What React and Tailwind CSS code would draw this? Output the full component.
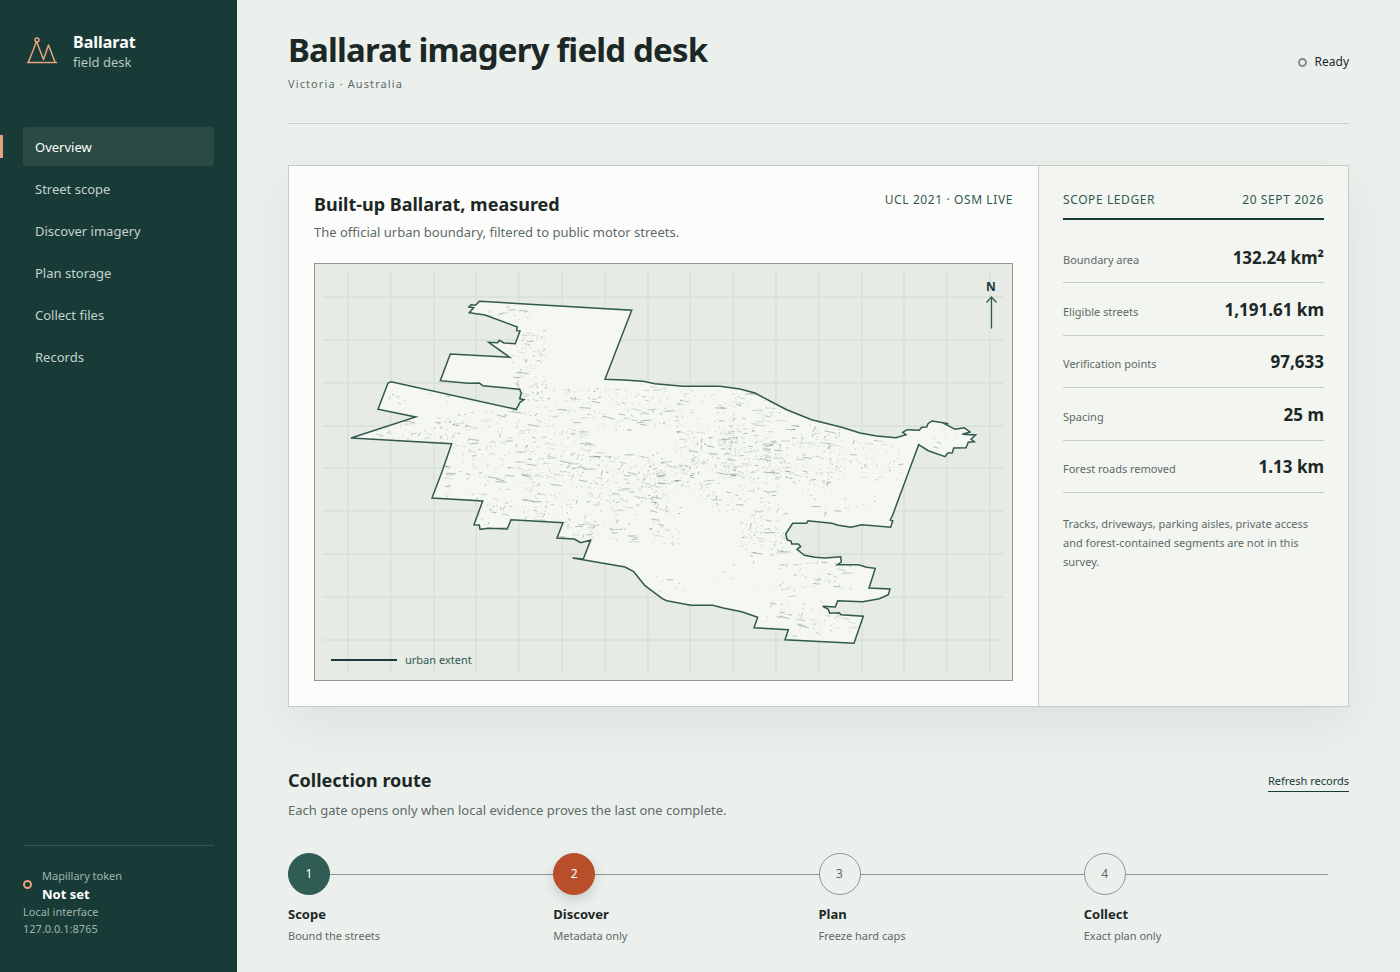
import { useMemo } from "react";

const navItems = [
  "Overview",
  "Street scope",
  "Discover imagery",
  "Plan storage",
  "Collect files",
  "Records",
];

const ledger = [
  { label: "Boundary area", value: "132.24 km²" },
  { label: "Eligible streets", value: "1,191.61 km" },
  { label: "Verification points", value: "97,633" },
  { label: "Spacing", value: "25 m" },
  { label: "Forest roads removed", value: "1.13 km" },
];

const steps = [
  {
    title: "Scope",
    note: "Bound the streets",
    circle: "border-[#2f5d54] bg-[#2f5d54] text-white",
  },
  {
    title: "Discover",
    note: "Metadata only",
    circle: "border-[#b94f2a] bg-[#b94f2a] text-white shadow-[0_5px_12px_rgba(25,59,55,0.18)]",
  },
  {
    title: "Plan",
    note: "Freeze hard caps",
    circle: "border-[#8b9894] bg-[#ebf0ed] text-[#5d6b68]",
  },
  {
    title: "Collect",
    note: "Exact plan only",
    circle: "border-[#8b9894] bg-[#ebf0ed] text-[#5d6b68]",
  },
];

const boundary =
  "M479.3 301.3L631.7 310.3L605 379.3L623.3 380L643.3 381.3L655 383.7L683.3 386.3L720 386.3L740 389L755 393L770 401L786.7 409.7L811.7 419.7L841.7 427.3L860 433L876.7 436L896 437.7L906 434.7L902.7 432.3L907.3 429.7L919.3 430.3L921.7 427.3L926.7 427L928 423.7L932 421L940 422.3L948.3 423.7L945 424L955 429.3L964.3 427.7L970 432L962.3 434.3L975.7 435L971 439.3L974.3 441.7L968.3 442.3L966 447.7L953.7 448L952.3 452.7L947.7 453L945 456.7L928.3 450.7L918.7 444.7L909.3 470L892.7 515L890.3 520L892.7 520.7L890.7 527.3L861.7 524.7L851 527.3L838.3 525.3L831.7 523.3L808 520.7L806.7 523.3L792.7 523.3L785.7 534L787.3 540L791 541L791.7 544L798.3 544L800.7 546.7L797 549.3L804.3 555.3L815 557.3L825 558L840.7 556.7L841.3 562L837.3 564.7L858.3 564.7L866.7 567.3L875.3 568.3L869 588L890 589L888.3 594.7L879.3 598.7L862.7 601.7L837.7 600.7L835.3 607L822.7 606.3L828.3 609.3L829.7 613.3L839.3 612.7L841 614.7L863.3 616.3L854 643.3L785 639.7L788.3 629.7L754 627.7L757.7 617.3L741.7 611.7L723.3 608L712.7 605.3L691 605.3L666.7 600.7L662.3 598.7L645 585.7L633.7 571.7L625 567L572.7 558L583.3 559L590.7 540L580.7 542.7L574.3 539L557 538L563 522.7L511 519.7L507.3 529L488.3 528.3L480 529.3L479.3 525L474 524.7L482.7 501L432 498L442 471.7L451.7 443.7L351 438L415.7 417L378 409.3L388 383L391 381.7L516.3 409.3L520 402.3L524 399.7L519.7 398.7L521.3 393.3L519.7 389.3L482.7 385.7L479.3 383L468.3 383.3L440.3 380.7L450.3 354L509.7 357.3L488.7 342.3L497.7 342.7L499.3 340.3L504 343L515.3 343.7L520 331L516.7 330.7L517.3 327L485 315L469.3 312.7L473.7 307.7L469 307L471 304.7L475.7 305.3Z";

// [x, y, width, height, count] of each neighbourhood
const districts = [
  [485, 304, 45, 16, 16],
  [512, 330, 34, 70, 110],
  [390, 390, 60, 14, 12],
  [375, 415, 80, 24, 65],
  [440, 410, 100, 60, 150],
  [440, 470, 100, 50, 110],
  [480, 505, 60, 24, 30],
  [535, 388, 110, 42, 130],
  [525, 430, 65, 60, 130],
  [590, 452, 75, 50, 150],
  [535, 490, 90, 50, 110],
  [620, 500, 60, 45, 60],
  [640, 384, 90, 44, 90],
  [675, 430, 60, 45, 130],
  [640, 460, 80, 40, 110],
  [730, 392, 50, 50, 90],
  [720, 440, 70, 40, 170],
  [700, 480, 80, 32, 60],
  [740, 512, 50, 44, 90],
  [785, 425, 55, 60, 130],
  [835, 440, 65, 40, 65],
  [925, 428, 40, 20, 10],
  [655, 560, 100, 35, 18],
  [770, 560, 80, 30, 60],
  [765, 595, 60, 20, 18],
  [765, 612, 85, 26, 55],
  [800, 480, 80, 35, 28],
];

const verticals = [348, 391, 434, 476, 519, 562, 605, 648, 690, 733, 776, 819, 862, 904, 947, 990];
const horizontals = [297, 340, 383, 426, 468, 511, 554, 597, 640];

// Fixed seed, so the strokes stay put between renders
const buildStreets = () => {
  let seed = 2021;
  const random = () => {
    seed = (seed * 16807) % 2147483647;
    return seed / 2147483647;
  };
  const layers = ["", "", ""];
  districts.forEach(([x, y, w, h, count]) => {
    for (let i = 0; i < count; i++) {
      const px = x + random() * w;
      const py = y + random() * h;
      const across = random() < 0.72;
      const size = random();
      const length = across ? 1 + size ** 5 * 11 : 1 + size ** 4 * 4;
      const angle = ((across ? 4 : 112) + (random() - 0.5) * 24) * (Math.PI / 180);
      const dx = (Math.cos(angle) * length).toFixed(1);
      const dy = (Math.sin(angle) * length).toFixed(1);
      layers[i % 3] += `M${px.toFixed(1)} ${py.toFixed(1)}l${dx} ${dy}`;
    }
  });
  return layers;
};

const Logo = () => (
  <svg viewBox="0 0 38 38" className="h-[38px] w-[38px] shrink-0" fill="none" stroke="#e6a27d" strokeWidth="1.5">
    <path d="M4 29.500H34M5.500 29L13.500 8.500L20.500 26.500L25.500 12L32 29" strokeLinejoin="round" />
    <circle cx="14" cy="7" r="2" />
  </svg>
);

const Sidebar = () => (
  <aside className="sticky top-0 flex h-screen w-[237px] shrink-0 flex-col bg-[#193b37] px-[23px] pt-8 pb-[35px] text-[#c3d2cc]">
    <div className="flex items-center gap-3">
      <Logo />
      <div>
        <p className="text-base leading-5 font-bold text-white">Ballarat</p>
        <p className="text-[13px] leading-5 text-[#b5c8c1]">field desk</p>
      </div>
    </div>
    <nav className="mt-[55px] flex flex-col gap-[3px]">
      {navItems.map((item, index) => (
        <a
          key={item}
          href="#"
          className={
            index === 0
              ? "relative flex h-[39px] items-center rounded-[3px] bg-[#2b4a45] px-3 pt-[2px] text-[13px] text-white before:absolute before:top-2 before:-left-[23px] before:h-[23px] before:w-[3px] before:bg-[#e6a27d]"
              : "flex h-[39px] items-center rounded-[3px] px-3 pt-[2px] text-[13px]"
          }
        >
          {item}
        </a>
      ))}
    </nav>
    <div className="mt-auto border-t border-[#355650] pt-5 text-[11px] text-[#9db5ac]">
      <div className="flex items-center gap-[10px]">
        <span className="h-[9px] w-[9px] rounded-full border-2 border-[#e6a27d]"></span>
        <div>
          <p className="leading-[19px]">Mapillary token</p>
          <p className="text-[13px] leading-[18px] font-bold text-white">Not set</p>
        </div>
      </div>
      <p className="leading-[17px]">Local interface</p>
      <p className="leading-[17px]">127.0.0.1:8765</p>
    </div>
  </aside>
);

const ExtentMap = () => {
  const streets = useMemo(() => buildStreets(), []);

  return (
    <div className="relative mt-[21px] border border-[#8b9894] bg-[#e6ebe5]">
      <svg viewBox="315 264 697 416" className="block h-auto w-full" role="img" aria-label="Urban extent of Ballarat">
        <defs>
          <clipPath id="extent">
            <path d={boundary} />
          </clipPath>
        </defs>
        <g stroke="#d8dfd9" strokeWidth="1.300">
          {verticals.map((x) => (
            <path key={x} d={`M${x} 272V672`} />
          ))}
          {horizontals.map((y) => (
            <path key={y} d={`M323 ${y}H1004`} />
          ))}
        </g>
        <path d={boundary} fill="#f6f7f2" fillOpacity="0.920" />
        <g clipPath="url(#extent)" fill="none" stroke="#3c5751">
          <path d={streets[0]} strokeWidth="0.600" strokeOpacity="0.600" />
          <path d={streets[1]} strokeWidth="0.600" strokeOpacity="0.400" />
          <path d={streets[2]} strokeWidth="0.500" strokeOpacity="0.300" />
        </g>
        <path d={boundary} fill="none" stroke="#31594f" strokeWidth="1.500" />
        <path d="M991.500 328.500V297M986.500 302.500L991.500 297L996.500 302.500" fill="none" stroke="#31594f" strokeWidth="1.300" />
        <text x="991" y="291" textAnchor="middle" fontSize="12" fontWeight="700" fill="#193b37">
          N
        </text>
      </svg>
      <div className="absolute bottom-3 left-4 flex items-center gap-2 text-[11px] leading-4 text-[#31594f]">
        <span className="h-[2px] w-[66px] bg-[#193b37]"></span>
        urban extent
      </div>
    </div>
  );
};

const ScopeCard = () => (
  <section className="mt-[41px] flex border border-[#c4ccc7] bg-[#fcfdfb] shadow-[0_18px_45px_rgba(25,59,55,0.07)]">
    <div className="min-w-0 flex-1 p-[25px]">
      <div className="flex items-start justify-between">
        <div>
          <h2 className="pt-px text-[18px] leading-6 font-bold">Built-up Ballarat, measured</h2>
          <p className="mt-[6px] text-[13px] leading-5 text-[#5d6b68]">
            The official urban boundary, filtered to public motor streets.
          </p>
        </div>
        <p className="pt-px text-[12px] leading-4 tracking-wider text-[#31594f]">UCL 2021 · OSM LIVE</p>
      </div>
      <ExtentMap />
    </div>
    <div className="w-[310px] shrink-0 border-l border-[#c4ccc7] bg-[#f3f5f1] px-6 py-[25px]">
      <div className="flex justify-between border-b-2 border-[#193b37] pt-px pb-[10px] text-[12px] leading-4 tracking-wider text-[#31594f]">
        <h2>SCOPE LEDGER</h2>
        <p>20 SEPT 2026</p>
      </div>
      <dl className="mt-[11px] grid h-[262px] grid-rows-5">
        {ledger.map((row) => (
          <div key={row.label} className="flex items-center border-b border-[#c4ccc7] pt-[2px]">
            <div className="flex flex-1 items-baseline justify-between">
              <dt className="text-[11px] text-[#5d6b68]">{row.label}</dt>
              <dd className="text-[17px] leading-6 font-bold">{row.value}</dd>
            </div>
          </div>
        ))}
      </dl>
      <p className="mt-[21px] text-[11px] leading-[19px] text-[#5d6b68]">
        Tracks, driveways, parking aisles, private access and forest-contained segments are not in this survey.
      </p>
    </div>
  </section>
);

const CollectionRoute = () => (
  <section className="mt-[61px]">
    <div className="flex items-start justify-between">
      <div>
        <h2 className="text-[18px] leading-6 font-bold">Collection route</h2>
        <p className="mt-2 text-[13px] leading-5 text-[#5d6b68]">
          Each gate opens only when local evidence proves the last one complete.
        </p>
      </div>
      <button type="button" className="mt-1 border-b border-[#193b37] pb-[2px] text-[11px] leading-[17px] text-[#193b37]">
        Refresh records
      </button>
    </div>
    <div className="relative mt-[33px]">
      <div className="absolute top-[21px] right-[21px] left-0 h-px bg-[#8b9894]"></div>
      <ol className="relative grid grid-cols-4">
        {steps.map((step, index) => (
          <li key={step.title}>
            <span className={`flex h-[42px] w-[42px] items-center justify-center rounded-full border text-[12px] ${step.circle}`}>
              {index + 1}
            </span>
            <h3 className="mt-[10px] text-[13px] leading-[18px] font-bold">{step.title}</h3>
            <p className="mt-[5px] text-[11px] leading-4 text-[#5d6b68]">{step.note}</p>
          </li>
        ))}
      </ol>
    </div>
  </section>
);

export default function App() {
  return (
    <div className="flex min-h-screen bg-[#ebf0ed] font-['Noto_Sans',sans-serif] text-[#1c2826]">
      <Sidebar />
      <main className="min-w-0 flex-1 px-[51px] pt-[29px] pb-7">
        <header className="flex items-center justify-between border-b border-[#c9d1cc] pb-[30px]">
          <div>
            <h1 className="text-[33px] leading-[42px] font-bold tracking-tight">Ballarat imagery field desk</h1>
            <p className="mt-1 text-[11px] leading-[18px] tracking-widest text-[#5d6b68]">Victoria · Australia</p>
          </div>
          <p className="flex items-center gap-2 pt-[2px] text-[12px] leading-4">
            <span className="h-[9px] w-[9px] rounded-full border-2 border-[#80908a]"></span>
            Ready
          </p>
        </header>
        <ScopeCard />
        <CollectionRoute />
      </main>
    </div>
  );
}
